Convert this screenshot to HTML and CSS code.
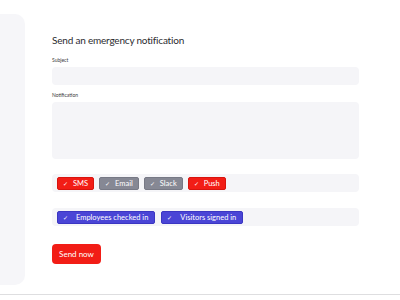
FILE: index.html
```html
<!DOCTYPE html>
<html lang="en">
<head>
    <meta charset="UTF-8">
    <meta name="viewport" content="width=device-width, initial-scale=1.0">
    <title>Emergency notification</title>
    <link rel="stylesheet" href="styles.css">
</head>
<body>
    <div class="page">
        <aside class="sidebar"></aside>
        <main class="content">
            <h2 class="title">Send an emergency notification</h2>
            <form class="form" action="#" method="post">
                <label class="label" for="subject">Subject</label>
                <input class="field" type="text" name="subject" id="subject">

                <label class="label" for="notification">Notification</label>
                <textarea class="field area" name="notification" id="notification"></textarea>

                <div class="chips channels">
                    <span class="chip red">✓ <b>SMS</b></span>
                    <span class="chip gray">✓ <b>Email</b></span>
                    <span class="chip gray">✓ <b>Slack</b></span>
                    <span class="chip red">✓ <b>Push</b></span>
                </div>

                <div class="chips recipients">
                    <span class="chip blue">✓ <b>Employees checked in</b></span>
                    <span class="chip blue">✓ <b>Visitors signed in</b></span>
                </div>

                <a class="btn" id="send">Send now</a>
            </form>
        </main>
    </div>
</body>
</html>
```

FILE: styles.css
```css
*{
    box-sizing: border-box;
    margin: 0;
    padding: 0;
}
body{
    width: 400px;
    height: 300px;
    background: #fff;
    font-family: "Lato", "Noto Sans", sans-serif;
    color: #2e2e33;
    overflow: hidden;
}
.page{
    display: flex;
    height: 295px;
    border-bottom: 1px solid #dedee0;
}
.sidebar{
    width: 25px;
    height: 271px;
    margin-top: 14px;
    background: #f6f6f9;
    border-radius: 0 10px 10px 0;
}
.content{
    padding: 34px 0 0 27px;
    width: 334px;
}
.title{
    font-size: 10px;
    line-height: 13px;
    font-weight: 400;
    letter-spacing: -0.2px;
    color: #2b2b30;
    margin-bottom: 10px;
}
.form{
    display: flex;
    flex-direction: column;
    align-items: flex-start;
}
.label{
    font-size: 5px;
    line-height: 7px;
    color: #3a3a40;
    margin-bottom: 3px;
}
.field{
    width: 307px;
    height: 18px;
    border: none;
    outline: none;
    background: #f5f5f8;
    border-radius: 4px;
    margin-bottom: 7px;
    resize: none;
}
.area{
    height: 57px;
    margin-bottom: 15px;
}
.chips{
    display: flex;
    gap: 5px;
    width: 307px;
    height: 18px;
    padding: 3px 5px;
    background: #f5f5f8;
    border-radius: 4px;
    margin-bottom: 16px;
}
.recipients{
    gap: 6px;
    margin-bottom: 18px;
}
.chip{
    display: flex;
    align-items: center;
    height: 13px;
    padding: 0 5px;
    border-radius: 2px;
    color: #fff;
    font-size: 6px;
    white-space: nowrap;
}
.chip b{
    font-weight: 400;
    font-size: 7.5px;
    margin-left: 5px;
}
.blue b{
    margin-left: 8px;
}
.blue{
    padding-right: 6px;
}
.red{
    background: #f21d16;
    border: 1px solid #d8140e;
}
.gray{
    background: #868894;
    border: 1px solid #777985;
}
.blue{
    background: #4a45d6;
    border: 1px solid #3b36c2;
}
.btn{
    display: flex;
    align-items: center;
    justify-content: center;
    width: 49px;
    height: 20px;
    background: #f21d16;
    border-radius: 4px;
    color: #fff;
    font-size: 8px;
}
```
